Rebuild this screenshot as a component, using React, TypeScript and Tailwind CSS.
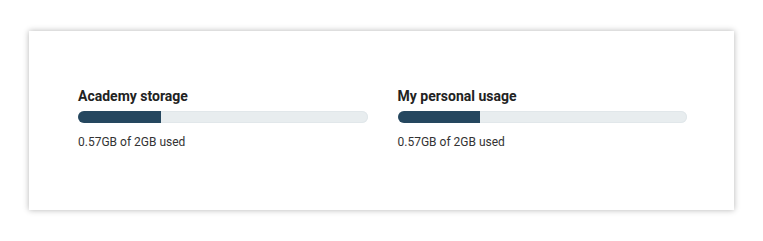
export default function App() {
  const items = [
    { title: 'Academy storage', used: 0.57, total: 2 },
    { title: 'My personal usage', used: 0.57, total: 2 },
  ];

  return (
    <div className="w-[763px] h-[241px] bg-white pt-[31px] px-[29px] font-['Roboto',sans-serif]">
      {/* Storage card */}
      <div className="h-[179px] bg-white shadow-[0_0_6px_rgba(0,0,0,0.3)] pl-[49px] pr-[47px] pt-[55px]">
        <div className="grid grid-cols-2 gap-[30px]">
          {items.map((it) => (
            <div key={it.title}>
              <h2 className="text-[14px] leading-5 font-bold text-[#222]">{it.title}</h2>
              <div className="mt-[5px] h-3 rounded-full bg-[#e8edef] shadow-[inset_0_0_0_1px_#e1e7ea] overflow-hidden">
                <div
                  className="h-full bg-[#25475f]"
                  style={{ width: `${(it.used / it.total) * 100}%` }}
                />
              </div>
              <p className="mt-[11px] text-[12px] leading-4 text-[#333]">
                {it.used}GB of {it.total}GB used
              </p>
            </div>
          ))}
        </div>
      </div>
    </div>
  );
}
